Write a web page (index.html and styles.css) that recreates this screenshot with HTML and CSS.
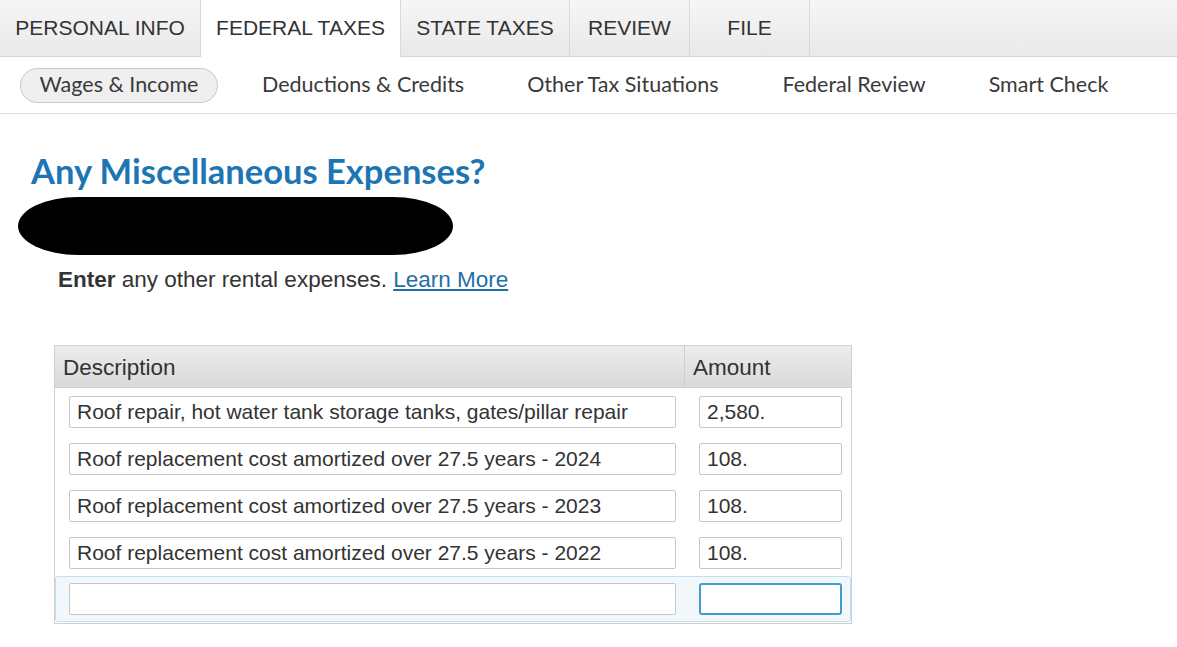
FILE: index.html
```html
<!DOCTYPE html>
<html>
<head>
<meta charset="utf-8">
<link rel="stylesheet" href="styles.css">
</head>
<body>
<nav class="tabs">
  <div class="tab">PERSONAL INFO</div>
  <div class="tab active">FEDERAL TAXES</div>
  <div class="tab">STATE TAXES</div>
  <div class="tab">REVIEW</div>
  <div class="tab tab-file">FILE</div>
  <div class="tab-fill"></div>
</nav>
<nav class="subnav">
  <div class="sub pill">Wages &amp; Income</div>
  <div class="sub s2">Deductions &amp; Credits</div>
  <div class="sub s3">Other Tax Situations</div>
  <div class="sub s4">Federal Review</div>
  <div class="sub s5">Smart Check</div>
</nav>
<main class="content">
  <h1 class="title">Any Miscellaneous Expenses?</h1>
  <div class="redact"></div>
  <p class="lead"><b>Enter</b> any other rental expenses. <a href="#" class="link">Learn More</a></p>
  <div class="grid">
    <div class="ghead">
      <div class="gh-desc">Description</div>
      <div class="gh-amt">Amount</div>
    </div>
    <div class="grow">
      <div class="field desc">Roof repair, hot water tank storage tanks, gates/pillar repair</div>
      <div class="field amt">2,580.</div>
    </div>
    <div class="grow">
      <div class="field desc">Roof replacement cost amortized over 27.5 years - 2024</div>
      <div class="field amt">108.</div>
    </div>
    <div class="grow">
      <div class="field desc">Roof replacement cost amortized over 27.5 years - 2023</div>
      <div class="field amt">108.</div>
    </div>
    <div class="grow">
      <div class="field desc">Roof replacement cost amortized over 27.5 years - 2022</div>
      <div class="field amt">108.</div>
    </div>
    <div class="grow active-row">
      <div class="field desc"></div>
      <div class="field amt focus"></div>
    </div>
  </div>
</main>
</body>
</html>
```

FILE: styles.css
```css
* { box-sizing: border-box; }
html, body { margin: 0; padding: 0; background: #fff; }
body { font-family: "Liberation Sans", Arial, sans-serif; color: #333; }

.tabs {
  display: flex;
  height: 57px;
  background: linear-gradient(#f6f6f6, #e9e9e9);
  border-bottom: 1px solid #d4d4d4;
}
.tab {
  display: flex;
  align-items: center;
  justify-content: center;
  font-size: 21px;
  color: #333;
  border-right: 1px solid #d9d9d9;
  padding: 0 0 1px;
  white-space: nowrap;
}
.tab:nth-child(1) { width: 201px; }
.tab:nth-child(2) { width: 200px; }
.tab:nth-child(3) { width: 169px; }
.tab:nth-child(4) { width: 120px; }
.tab:nth-child(5) { width: 120px; }
.tab.active { background: #fff; margin-bottom: -1px; border-bottom: 1px solid #fff; }
.tab-fill { flex: 1; }

.subnav {
  display: flex;
  align-items: center;
  height: 57px;
  border-bottom: 1px solid #dcdcdc;
  font-family: Lato, "Open Sans", sans-serif;
  font-size: 21.5px;
  color: #3a3a3a;
  padding-left: 20px;
}
.sub { white-space: nowrap; padding-bottom: 2px; }
.pill {
  background: #efefef;
  border: 1px solid #c9c9c9;
  border-radius: 18px;
  height: 35px;
  width: 198px;
  display: flex;
  align-items: center;
  justify-content: center;
  padding-bottom: 3px;
}
.s2 { margin-left: 44px; }
.s3 { margin-left: 63px; }
.s4 { margin-left: 64px; }
.s5 { margin-left: 63px; }

.content { padding: 0 0 0 31px; }
.title {
  margin: 0;
  padding-top: 37px;
  font-family: Lato, "Open Sans", sans-serif;
  font-weight: 700;
  font-size: 34.5px;
  line-height: 40px;
  color: #1d76b3;
}
.redact {
  width: 435px;
  height: 58px;
  margin: 6px 0 0 -13px;
  background: #000;
  border-radius: 60px / 29px;
}
.lead {
  margin: 10px 0 0 27px;
  font-size: 22.5px;
  line-height: 30px;
  color: #333;
}
.lead b { color: #333; }
.link { color: #1f6fa8; text-decoration: underline; }

.grid {
  margin: 50px 0 0 23px;
  width: 798px;
  border: 1px solid #cfcfcf;
  padding-bottom: 1px;
}
.ghead {
  display: flex;
  height: 42px;
  background: linear-gradient(#ededed, #d9d9d9);
  border-bottom: 1px solid #cfcfcf;
  font-size: 22.5px;
  color: #333;
}
.gh-desc {
  width: 630px;
  padding: 9px 0 0 8px;
  border-right: 1px solid #cfcfcf;
}
.gh-amt { padding: 9px 0 0 8px; }

.grow {
  display: flex;
  align-items: center;
  height: 47px;
  padding: 0 0 0 14px;
}
.field {
  height: 32px;
  border: 1px solid #c6c6c6;
  border-radius: 2px;
  background: #fff;
  font-size: 21px;
  color: #333;
  padding: 3px 0 0 7px;
  white-space: nowrap;
  overflow: hidden;
}
.desc { width: 607px; }
.amt { width: 143px; margin-left: 23px; }
.active-row {
  background: #f1f7fb;
  border: 1px solid #bfe0ef;
  border-radius: 3px;
  height: 46px;
  padding-left: 13px;
}
.focus { border: 2px solid #3f9ccd; border-radius: 3px; }
```
